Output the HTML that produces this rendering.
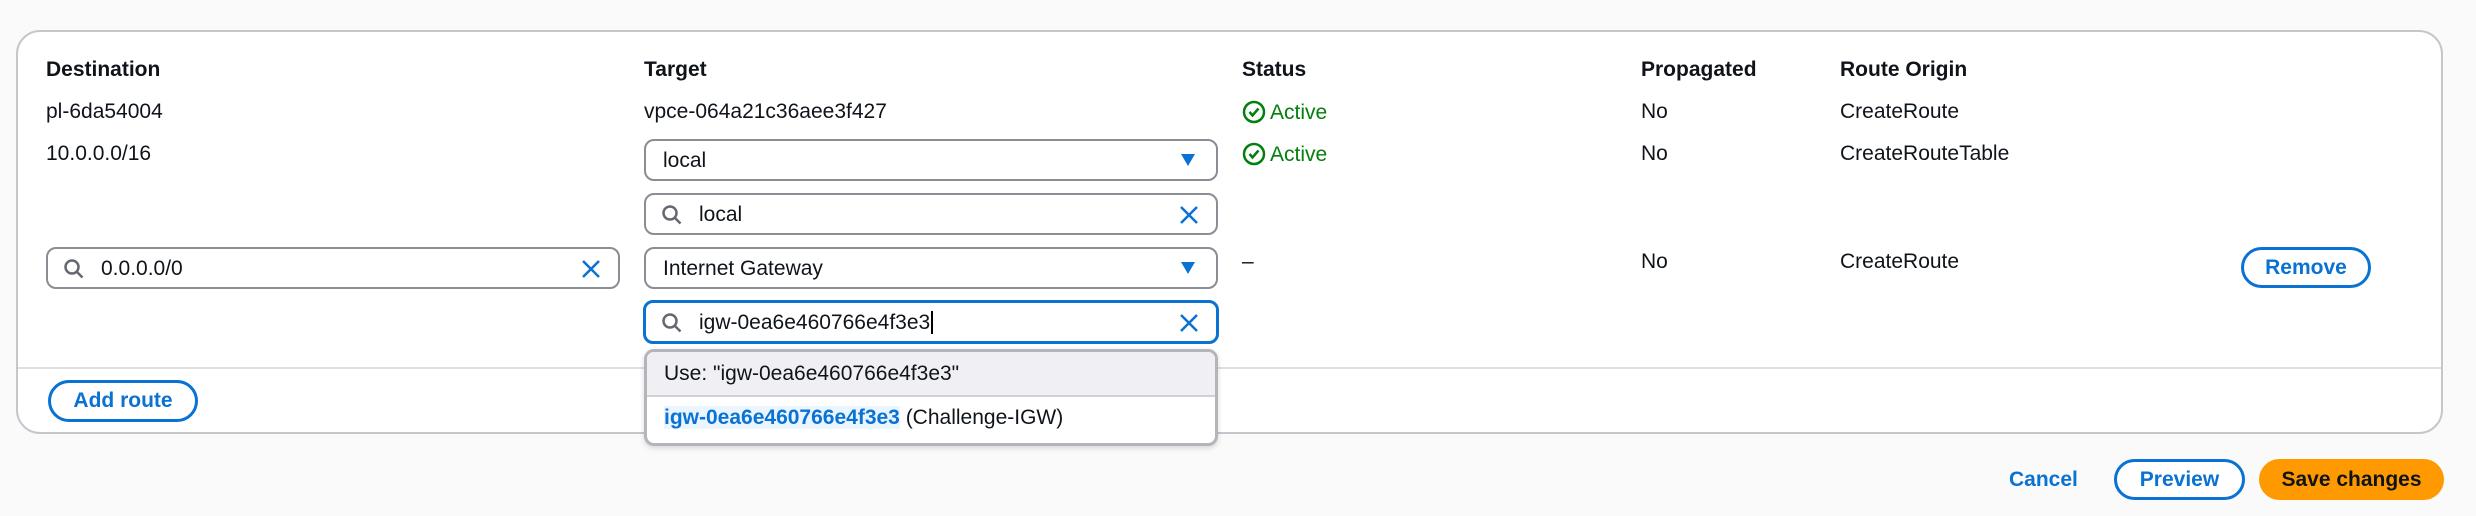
<!DOCTYPE html>
<html><head><meta charset="utf-8"><style>
*{box-sizing:border-box;margin:0;padding:0}
body{width:2476px;height:516px;background:#fafafa;font-family:"Liberation Sans",sans-serif;font-size:21px;color:#0f141a;position:relative;overflow:hidden}
.a{position:absolute;white-space:nowrap}
.card{position:absolute;left:16px;top:30px;width:2427px;height:404px;background:#fff;border:2px solid #c6c6cd;border-radius:24px}
.h{font-weight:bold;top:58px}
.t{line-height:24px}
.box{position:absolute;border:2px solid #8c8c94;border-radius:10px;background:#fff;height:42px}
.box span{position:absolute;top:8px;line-height:24px}
.btn{position:absolute;border:3px solid #0972d3;border-radius:22px;color:#0972d3;font-weight:bold;text-align:center;background:#fff}
.g{color:#037f0c}
</style></head><body>
<div class="card"></div>
<div class="a h" style="left:46px">Destination</div>
<div class="a h" style="left:644px">Target</div>
<div class="a h" style="left:1242px">Status</div>
<div class="a h" style="left:1641px">Propagated</div>
<div class="a h" style="left:1840px">Route Origin</div>

<div class="a t" style="left:46px;top:100px">pl-6da54004</div>
<div class="a t" style="left:644px;top:100px">vpce-064a21c36aee3f427</div>
<div class="a t g" style="left:1242px;top:100px"><svg width="24" height="24" viewBox="0 0 24 24" style="vertical-align:-5px;margin-right:4px"><circle cx="12" cy="12" r="10" fill="none" stroke="#037f0c" stroke-width="2.5"/><path d="M7.5 12l3 3.5 6-7" fill="none" stroke="#037f0c" stroke-width="2.5"/></svg>Active</div>
<div class="a t" style="left:1641px;top:100px">No</div>
<div class="a t" style="left:1840px;top:100px">CreateRoute</div>

<div class="a t" style="left:46px;top:142px">10.0.0.0/16</div>
<div class="a t g" style="left:1242px;top:142px"><svg width="24" height="24" viewBox="0 0 24 24" style="vertical-align:-5px;margin-right:4px"><circle cx="12" cy="12" r="10" fill="none" stroke="#037f0c" stroke-width="2.5"/><path d="M7.5 12l3 3.5 6-7" fill="none" stroke="#037f0c" stroke-width="2.5"/></svg>Active</div>
<div class="a t" style="left:1641px;top:142px">No</div>
<div class="a t" style="left:1840px;top:142px">CreateRouteTable</div>

<!-- local select -->
<div class="box" style="left:644px;top:139px;width:574px"><span style="left:17px">local</span>
<svg class="a" style="left:534px;top:12px" width="16" height="14" viewBox="0 0 16 14"><path d="M1 1h14L8 13z" fill="#0972d3"/></svg></div>
<!-- local search -->
<div class="box" style="left:644px;top:193px;width:574px">
<svg class="a" style="left:15px;top:9px" width="22" height="22" viewBox="0 0 22 22"><circle cx="9" cy="9" r="6.5" fill="none" stroke="#656871" stroke-width="2.5"/><path d="M14 14l5.5 5.5" stroke="#656871" stroke-width="2.5"/></svg>
<span style="left:53px">local</span>
<svg class="a" style="left:533px;top:10px" width="20" height="20" viewBox="0 0 20 20"><path d="M2 2l16 16M18 2L2 18" stroke="#0972d3" stroke-width="2.5"/></svg></div>

<!-- destination input -->
<div class="box" style="left:46px;top:247px;width:574px">
<svg class="a" style="left:15px;top:9px" width="22" height="22" viewBox="0 0 22 22"><circle cx="9" cy="9" r="6.5" fill="none" stroke="#656871" stroke-width="2.5"/><path d="M14 14l5.5 5.5" stroke="#656871" stroke-width="2.5"/></svg>
<span style="left:53px">0.0.0.0/0</span>
<svg class="a" style="left:533px;top:10px" width="20" height="20" viewBox="0 0 20 20"><path d="M2 2l16 16M18 2L2 18" stroke="#0972d3" stroke-width="2.5"/></svg></div>
<!-- IGW select -->
<div class="box" style="left:644px;top:247px;width:574px"><span style="left:17px">Internet Gateway</span>
<svg class="a" style="left:534px;top:12px" width="16" height="14" viewBox="0 0 16 14"><path d="M1 1h14L8 13z" fill="#0972d3"/></svg></div>
<div class="a t" style="left:1242px;top:250px">–</div>
<div class="a t" style="left:1641px;top:250px">No</div>
<div class="a t" style="left:1840px;top:250px">CreateRoute</div>
<div class="btn" style="left:2241px;top:247px;width:130px;height:41px;line-height:35px">Remove</div>

<!-- focused search -->
<div class="box" style="left:643px;top:300px;width:576px;height:44px;border:3px solid #0972d3">
<svg class="a" style="left:15px;top:9px" width="22" height="22" viewBox="0 0 22 22"><circle cx="9" cy="9" r="6.5" fill="none" stroke="#656871" stroke-width="2.5"/><path d="M14 14l5.5 5.5" stroke="#656871" stroke-width="2.5"/></svg>
<span style="left:53px">igw-0ea6e460766e4f3e3<span style="position:static;border-left:2px solid #000;margin-left:1px"></span></span>
<svg class="a" style="left:533px;top:10px" width="20" height="20" viewBox="0 0 20 20"><path d="M2 2l16 16M18 2L2 18" stroke="#0972d3" stroke-width="2.5"/></svg></div>

<!-- card separator -->
<div class="a" style="left:18px;top:367px;width:2423px;height:2px;background:#dedee3"></div>
<div class="btn" style="left:48px;top:380px;width:150px;height:42px;line-height:36px">Add route</div>

<!-- dropdown -->
<div class="a" style="left:644px;top:349px;width:574px;height:97px;border:3px solid #b4b4bb;border-radius:10px;background:#fff;overflow:hidden;box-shadow:0 2px 6px rgba(0,0,0,.15)">
<div style="height:45px;background:#f0f0f4;border-bottom:2px solid #d0d0d6;padding:10px 0 0 17px;line-height:24px">Use: "igw-0ea6e460766e4f3e3"</div>
<div style="padding:9px 0 0 17px;line-height:24px"><span style="color:#0972d3;font-weight:bold;background:#eaf5ff">igw-0ea6e460766e4f3e3</span> (Challenge-IGW)</div>
</div>

<!-- footer -->
<div class="a" style="left:2009px;top:468px;color:#0972d3;font-weight:bold;line-height:24px">Cancel</div>
<div class="btn" style="left:2114px;top:459px;width:131px;height:41px;line-height:35px">Preview</div>
<div class="a" style="left:2259px;top:459px;width:185px;height:41px;border-radius:22px;background:#ff9900;font-weight:bold;text-align:center;line-height:41px">Save changes</div>
</body></html>
